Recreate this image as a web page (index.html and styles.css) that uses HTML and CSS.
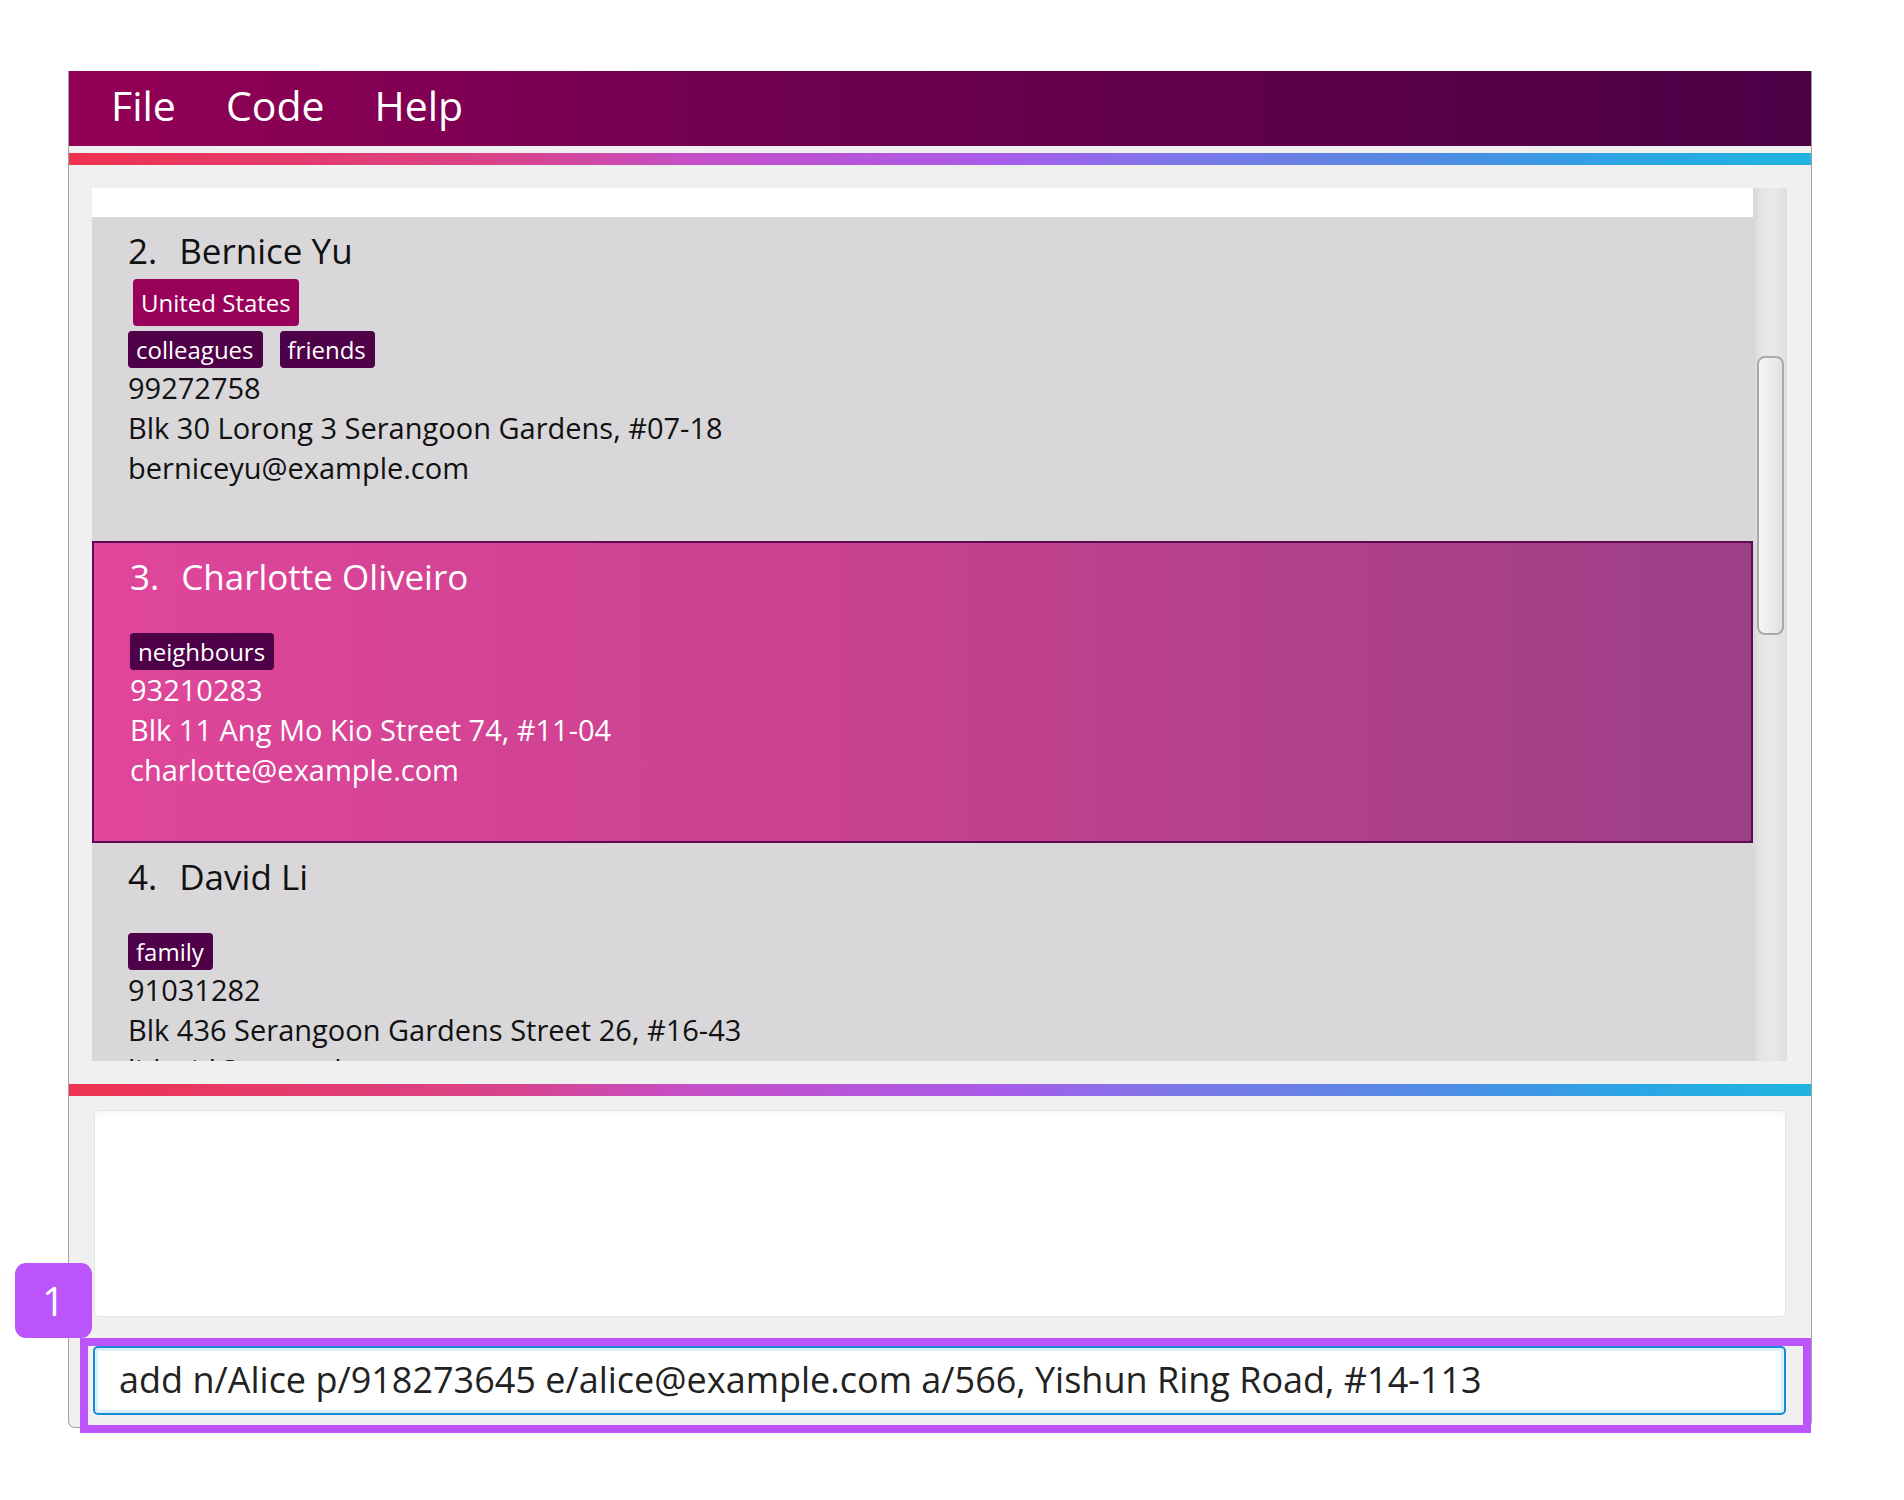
FILE: index.html
```html
<!DOCTYPE html>
<html lang="en">
<head>
<meta charset="utf-8">
<title>Address Book</title>
<link rel="stylesheet" href="styles.css">
</head>
<body>
<div class="stage">
  <div class="window">
    <div class="menubar">
      <span class="menu-item">File</span>
      <span class="menu-item">Code</span>
      <span class="menu-item">Help</span>
    </div>
    <div class="rainbow rainbow-top"></div>
    <div class="list-pane">
      <div class="list">
        <div class="cell-tail"></div>
        <div class="card">
          <div class="name"><span class="idx">2.</span><span>Bernice Yu</span></div>
          <div class="country-row"><span class="country">United States</span></div>
          <div class="tags"><span class="tag">colleagues</span><span class="tag">friends</span></div>
          <div class="field">99272758</div>
          <div class="field">Blk 30 Lorong 3 Serangoon Gardens, #07-18</div>
          <div class="field">berniceyu@example.com</div>
        </div>
        <div class="card selected">
          <div class="name"><span class="idx">3.</span><span>Charlotte Oliveiro</span></div>
          <div class="country-row"></div>
          <div class="tags"><span class="tag">neighbours</span></div>
          <div class="field">93210283</div>
          <div class="field">Blk 11 Ang Mo Kio Street 74, #11-04</div>
          <div class="field">charlotte@example.com</div>
        </div>
        <div class="card">
          <div class="name"><span class="idx">4.</span><span>David Li</span></div>
          <div class="country-row"></div>
          <div class="tags"><span class="tag">family</span></div>
          <div class="field">91031282</div>
          <div class="field">Blk 436 Serangoon Gardens Street 26, #16-43</div>
          <div class="field">lidavid@example.com</div>
        </div>
      </div>
      <div class="scrollbar"><div class="thumb"></div></div>
    </div>
    <div class="rainbow rainbow-bottom"></div>
    <div class="result"></div>
    <div class="command">add n/Alice p/918273645 e/alice@example.com a/566, Yishun Ring Road, #14-113</div>
  </div>
  <div class="highlight"></div>
  <div class="badge">1</div>
</div>
</body>
</html>
```
FILE: styles.css
```css
* { box-sizing: border-box; }

body {
  margin: 0;
  background: #ffffff;
  font-family: "Open Sans", "Noto Sans", sans-serif;
}

.stage {
  position: relative;
  width: 1904px;
  height: 1500px;
  padding: 71px 0 0 68px;
}

.window {
  width: 1744px;
  height: 1357px;
  background: #f0f0f0;
  border: 1px solid #a3a3a3;
  border-top: none;
  border-radius: 0 0 7px 7px;
  display: flex;
  flex-direction: column;
}

.menubar {
  height: 75px;
  flex: none;
  background: linear-gradient(90deg, #930056 0%, #6f0050 40%, #4b0046 100%);
  display: flex;
  align-items: center;
  gap: 50px;
  padding: 0 0 6px 42px;
  color: #ffffff;
  font-size: 41px;
  line-height: 69px;
}

.rainbow {
  height: 12px;
  flex: none;
  background: linear-gradient(90deg,
    #ef3350 0%,
    #d8438a 25%,
    #c54fc8 36%,
    #a95be9 53%,
    #7a78e8 64%,
    #6a7ee6 70%,
    #4a8ee6 80%,
    #2aa6e4 90%,
    #1fb4e0 100%);
}

.rainbow-top { margin-top: 7px; }
.rainbow-bottom { margin-top: 23px; }

.list-pane {
  margin: 23px 24px 0 23px;
  height: 873px;
  flex: none;
  display: flex;
}

.list {
  flex: 1;
  overflow: hidden;
  background: #ffffff;
}

.cell-tail {
  height: 29px;
  background: #ffffff;
}

.card {
  background: #d9d7d9;
  padding: 10px 20px 53px 36px;
  color: #111111;
}

.card.selected {
  background: linear-gradient(90deg, #e0469a 0%, #c9418f 45%, #9b3f87 100%);
  border: 2px solid #5e0b56;
  padding-bottom: 51px;
  color: #ffffff;
}

.name {
  display: flex;
  font-size: 35px;
  line-height: 48px;
}

.idx { margin-right: 22px; }

.country-row {
  display: flex;
  margin-top: 4px;
  min-height: 23px;
}

.country {
  margin-left: 5px;
  background: #98005a;
  color: #ffffff;
  font-size: 24px;
  line-height: 33px;
  padding: 7px 8px;
  border-radius: 4px;
}

.tags {
  display: flex;
  gap: 17px;
  margin-top: 5px;
}

.tag {
  background: #4e0048;
  color: #ffffff;
  font-size: 24px;
  line-height: 33px;
  padding: 2px 9px 2px 8px;
  border-radius: 4px;
}

.field {
  font-size: 29px;
  line-height: 40px;
  white-space: nowrap;
}

.scrollbar {
  width: 34px;
  background: linear-gradient(90deg, #d6d6d6 0%, #e4e4e4 20%, #e9e9e9 60%, #dedede 100%);
  padding: 168px 0 0 4px;
}

.thumb {
  width: 27px;
  height: 279px;
  border: 2px solid #a9a9a9;
  border-radius: 8px;
  background: linear-gradient(90deg, #f6f6f6 0%, #ebebeb 60%, #e0e0e0 100%);
}

.result {
  margin: 15px 26px 0 26px;
  height: 205px;
  flex: none;
  background: #ffffff;
  border-radius: 4px;
  box-shadow: 0 0 0 1px #e6e6e6, inset 0 5px 5px -3px rgba(0, 0, 0, 0.05);
}

.command {
  margin: 30px 25px 0 24px;
  height: 69px;
  flex: none;
  display: flex;
  align-items: center;
  padding: 0 0 2px 24px;
  background: #ffffff;
  border: 2px solid #1a8ad2;
  border-radius: 5px;
  box-shadow: inset 0 0 0 3px #d9eff9;
  color: #222222;
  font-size: 36px;
  white-space: nowrap;
}

.highlight {
  position: absolute;
  left: 80px;
  top: 1338px;
  width: 1731px;
  height: 95px;
  border: 8px solid #bb55fb;
}

.badge {
  position: absolute;
  left: 15px;
  top: 1263px;
  width: 77px;
  height: 75px;
  border-radius: 11px;
  background: #bb55fb;
  color: #ffffff;
  font-size: 40px;
  display: flex;
  align-items: center;
  justify-content: center;
}
```
